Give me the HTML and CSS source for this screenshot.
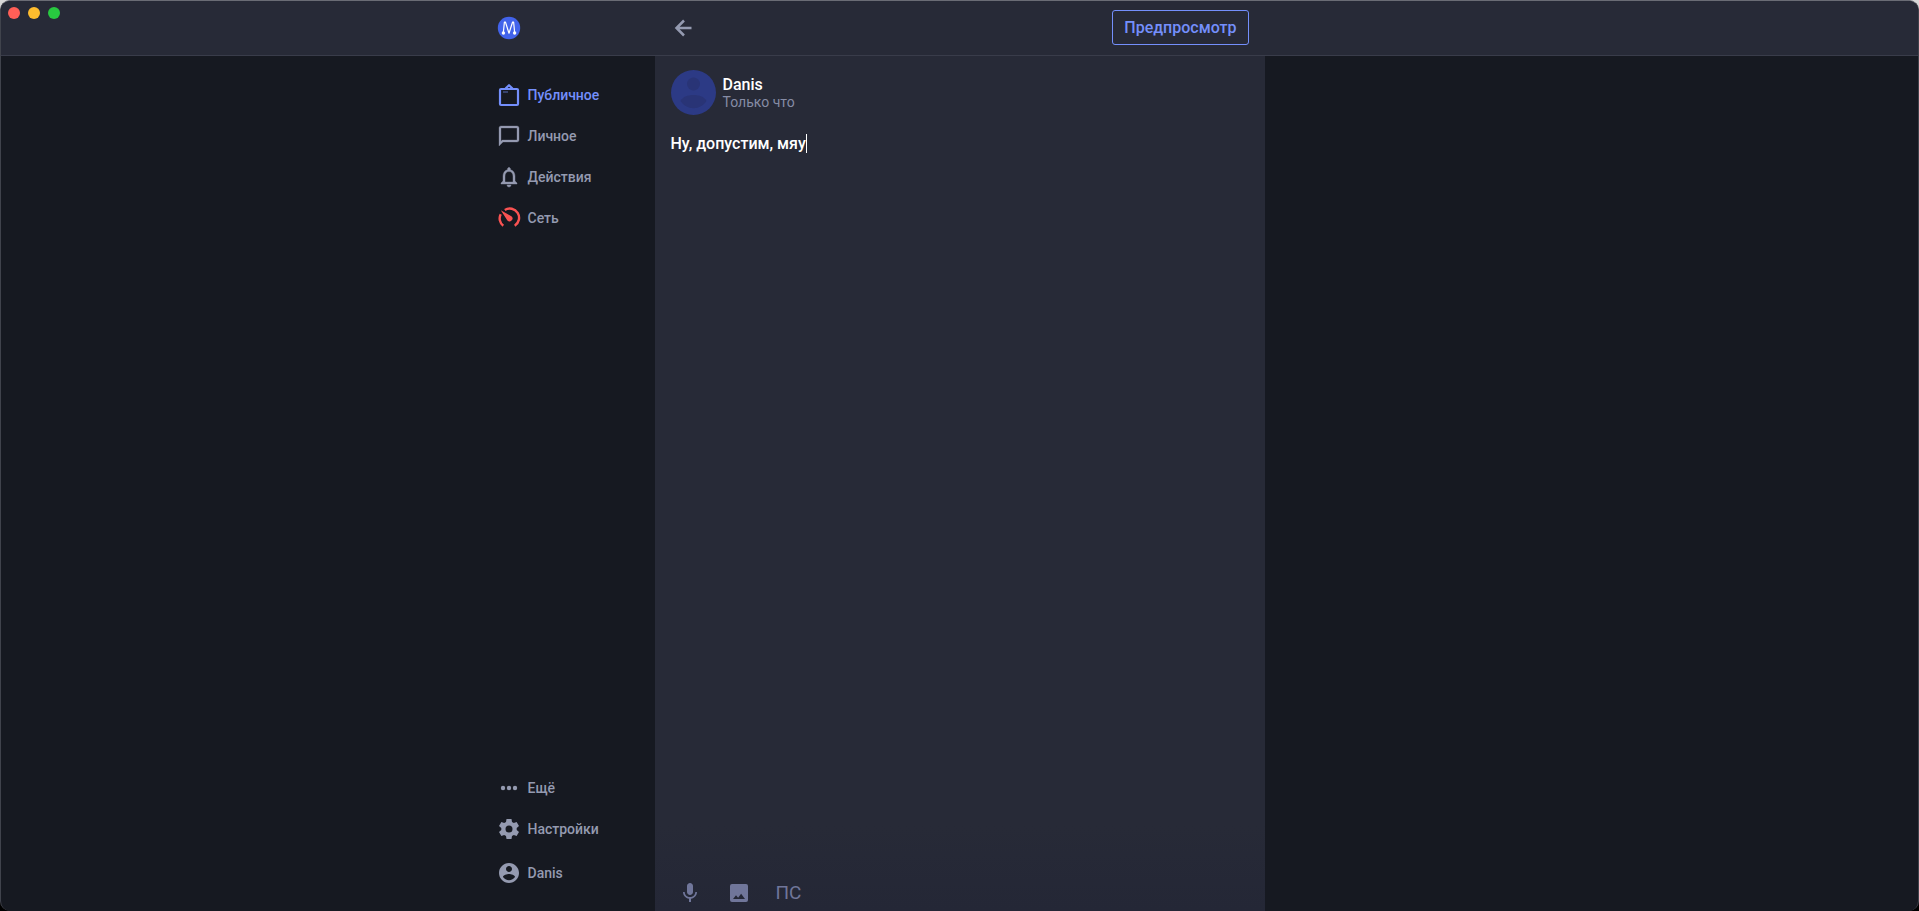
FILE: index.html
```html
<!DOCTYPE html>
<html lang="ru">
<head>
<meta charset="utf-8">
<title>Danis</title>
<link rel="stylesheet" href="styles.css">
</head>
<body>
<div class="window">
  <div class="lights" aria-hidden="true">
    <span class="light light-close"></span><span class="light light-min"></span><span class="light light-max"></span>
  </div>
  <header class="header columns">
    <div class="side">
      <a class="logo" href="#" aria-label="M">
        <svg width="24" height="24" viewBox="0 0 24 24"><circle cx="12" cy="12" r="11.200" fill="#4263eb"/><path d="M6.300 17 7.400 6h1L12 17.200 15.600 6h1l1.100 11" fill="none" stroke="#fff" stroke-width="1.200" stroke-linejoin="round"/><circle cx="6.400" cy="17" r="1.700" fill="#fff"/><circle cx="17.600" cy="17" r="1.700" fill="#fff"/></svg>
      </a>
    </div>
    <div class="bar">
      <button class="back" type="button" aria-label="Назад">
        <svg width="24" height="24" viewBox="0 0 24 24" fill="none" stroke="currentColor" stroke-width="2.500"><path d="M20.500 12H6M13 4.500 5.500 12l7.500 7.500"/></svg>
      </button>
      <button class="preview" type="button">Предпросмотр</button>
    </div>
  </header>
  <div class="body columns">
    <nav class="side nav">
      <div class="group">
        <a class="item active" href="#"><svg class="icon" viewBox="0 0 24 24" fill="none" stroke="currentColor" stroke-width="2.200" stroke-linejoin="round"><rect x="3" y="6" width="18" height="16" rx="1"/><path d="m8.500 5.500 3.500-3.300 3.500 3.300"/><path d="M6 9h5" stroke-width=".7"/></svg>Публичное</a>
        <a class="item" href="#"><svg class="icon" viewBox="0 0 24 24" fill="currentColor" stroke="currentColor" stroke-width=".3"><path d="M20 2H4c-1.100 0-2 .9-2 2v18l4-4h14c1.100 0 2-.9 2-2V4c0-1.100-.9-2-2-2zm0 14H5.200L4 17.200V4h16v12z"/></svg>Личное</a>
        <a class="item" href="#"><svg class="icon" viewBox="0 0 24 24" fill="currentColor" stroke="currentColor" stroke-width=".4"><path d="M12 22c1.100 0 2-.9 2-2h-4c0 1.100.9 2 2 2zm6-6v-5c0-3.070-1.630-5.640-4.500-6.320V4c0-.83-.67-1.500-1.500-1.500s-1.500.67-1.500 1.500v.68C7.640 5.360 6 7.920 6 11v5l-2 2v1h16v-1l-2-2zm-2 1H8v-6c0-2.480 1.510-4.500 4-4.500s4 2.020 4 4.500v6z"/></svg>Действия</a>
        <a class="item" href="#"><svg class="icon network" viewBox="0 0 24 24"><path d="M7.800 3.900A9.100 9.100 0 0 1 17.700 19.700M3.700 8.200A9.100 9.100 0 0 0 6.300 19.700" fill="none" stroke="currentColor" stroke-width="2.400"/><path d="m3.800 4.200 10.900 6.200a2.900 2.900 0 1 1-4.300 4z" fill="currentColor"/></svg>Сеть</a>
      </div>
      <div class="group">
        <a class="item" href="#"><svg class="icon" viewBox="0 0 24 24" fill="currentColor"><circle cx="6" cy="12" r="2.200"/><circle cx="12" cy="12" r="2.200"/><circle cx="18" cy="12" r="2.200"/></svg>Ещё</a>
        <a class="item" href="#"><svg class="icon" viewBox="0 0 24 24" fill="currentColor"><path fill-rule="evenodd" d="M9.500 2h5l.5 3 1.800 1 2.800-1.100 2.400 4.200-2.300 1.900v2l2.300 1.900-2.400 4.200-2.800-1.100-1.800 1-.5 3h-5L9 19l-1.800-1-2.800 1.100L2 14.900 4.300 13v-2L2 9.100l2.400-4.200L7.200 6 9 5zM12 8.500a3.500 3.500 0 1 0 0 7 3.500 3.500 0 0 0 0-7z"/></svg>Настройки</a>
        <a class="item profile" href="#"><svg class="icon" viewBox="0 0 24 24" fill="currentColor"><path d="M12 2C6.480 2 2 6.480 2 12s4.480 10 10 10 10-4.480 10-10S17.520 2 12 2zm0 3c1.660 0 3 1.340 3 3s-1.340 3-3 3-3-1.340-3-3 1.340-3 3-3zm0 14.200c-2.500 0-4.710-1.280-6-3.220.03-1.990 4-3.080 6-3.080s5.970 1.090 6 3.080c-1.290 1.940-3.500 3.220-6 3.220z"/></svg>Danis</a>
      </div>
    </nav>
    <main class="composer">
      <div class="author">
        <svg class="avatar" viewBox="0 0 45 45" aria-hidden="true"><circle cx="22.500" cy="22.500" r="22.500" fill="#2c3a85"/><circle cx="22.500" cy="14" r="6.500" fill="#293476"/><path d="M9.500 31c2-4 7-6 13-6s11 2 13 6c-3 4.500-7.500 7.200-13 7.200S12.500 35.500 9.500 31z" fill="#293476"/></svg>
        <div class="byline">
          <div class="name">Danis</div>
          <div class="time">Только что</div>
        </div>
      </div>
      <div class="editor">
        <textarea class="text" rows="1" aria-label="Текст" spellcheck="false">Ну, допустим, мяу</textarea><span class="caret"></span>
      </div>
      <div class="tools">
        <button class="tool" type="button" aria-label="Микрофон"><svg width="24" height="24" viewBox="0 0 24 24" fill="currentColor"><path d="M12 14c1.660 0 3-1.340 3-3V5c0-1.660-1.340-3-3-3S9 3.340 9 5v6c0 1.660 1.340 3 3 3zm5.300-3c0 3-2.540 5.100-5.300 5.100S6.700 14 6.700 11H5c0 3.410 2.720 6.230 6 6.720V21h2v-3.280c3.280-.48 6-3.300 6-6.720h-1.700z"/></svg></button>
        <button class="tool" type="button" aria-label="Изображение"><svg width="24" height="24" viewBox="0 0 24 24" fill="currentColor"><path fill-rule="evenodd" d="M5 3h14a2 2 0 0 1 2 2v14a2 2 0 0 1-2 2H5a2 2 0 0 1-2-2V5a2 2 0 0 1 2-2zm1 15h12l-3.900-5.200-3 3.900L9 14.200z"/></svg></button>
        <button class="tool ps" type="button">ПС</button>
      </div>
    </main>
  </div>
</div>
</body>
</html>
```
FILE: styles.css
```css
* { box-sizing: border-box; }
body {
  margin: 0;
  background: linear-gradient(#d8d8d8, #000 30%);
  font-family: Roboto, "Noto Sans", sans-serif;
  font-weight: 500;
  color: #949ab0;
}
button {
  padding: 0;
  border: 0;
  background: none;
  color: inherit;
  font: inherit;
}
svg { display: block; flex: none; }
.window {
  position: relative;
  display: flex;
  flex-direction: column;
  min-height: 100vh;
  overflow: hidden;
  border: 1px solid #40434c;
  border-top-color: #6a6c75;
  border-bottom: 0;
  border-radius: 10px;
  background: #161921;
}
.lights {
  position: absolute;
  top: 6px;
  left: 7px;
  display: flex;
  gap: 8px;
}
.light { width: 12px; height: 12px; border-radius: 50%; }
.light-close { background: #ff5f57; }
.light-min { background: #febc2e; }
.light-max { background: #28c840; }
.columns {
  display: grid;
  grid-template-columns: 1fr 610px 1fr;
}
.side { justify-self: end; width: 158px; }
.header {
  height: 55px;
  border-bottom: 1px solid #393c4a;
  background: #272a37;
}
.header .side { display: flex; align-items: center; }
.bar {
  display: flex;
  align-items: center;
  justify-content: space-between;
  padding: 0 16px;
}
.preview {
  height: 35px;
  margin-bottom: 2px;
  padding: 0 11px;
  border: 1px solid #748ffc;
  border-radius: 3px;
  color: #748ffc;
  font-size: 16px;
}
.body { flex: 1; }
.nav {
  display: flex;
  flex-direction: column;
  justify-content: space-between;
  padding: 18px 0;
}
.item {
  display: flex;
  align-items: center;
  gap: 7px;
  height: 41px;
  color: inherit;
  font-size: 14px;
  text-decoration: none;
}
.icon { width: 24px; height: 24px; }
.active { color: #748ffc; }
.network { color: #fa5252; }
.profile { margin-top: 3px; }
.composer {
  display: flex;
  flex-direction: column;
  padding: 14px 16px 6px;
  background: linear-gradient(#272a37 90%, #242736);
}
.author { display: flex; align-items: center; gap: 7px; }
.avatar { width: 45px; height: 45px; }
.byline { padding-top: 2px; }
.name { color: #fff; font-size: 16px; line-height: 18px; }
.time { font-size: 14px; line-height: 17px; font-weight: 400; color: #868ca5; }
.editor {
  display: flex;
  flex: 1;
  align-items: flex-start;
  padding-top: 19px;
}
.text {
  field-sizing: content;
  max-width: 100%;
  padding: 0;
  border: 0;
  outline: 0;
  resize: none;
  overflow: hidden;
  background: none;
  color: #fff;
  font: inherit;
  font-size: 16px;
  line-height: 19px;
}
.caret { width: 1px; height: 19px; background: #fff; }
.tools { display: flex; gap: 25px; padding-left: 7px; color: #70769a; }
.ps { font-size: 19px; line-height: 24px; font-weight: 400; }
```
